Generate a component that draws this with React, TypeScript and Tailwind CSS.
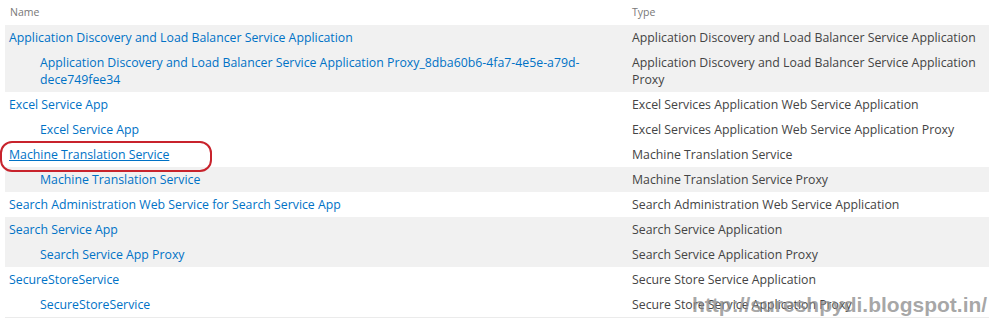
import React from "react";

type Row = {
  name: string;
  type: string;
  child?: boolean;
  shaded?: boolean;
  underline?: boolean;
};

const rows: Row[] = [
  {
    name: "Application Discovery and Load Balancer Service Application",
    type: "Application Discovery and Load Balancer Service Application",
    shaded: true,
  },
  {
    name: "Application Discovery and Load Balancer Service Application Proxy_8dba60b6-4fa7-4e5e-a79d-dece749fee34",
    type: "Application Discovery and Load Balancer Service Application Proxy",
    child: true,
    shaded: true,
  },
  { name: "Excel Service App", type: "Excel Services Application Web Service Application" },
  { name: "Excel Service App", type: "Excel Services Application Web Service Application Proxy", child: true },
  { name: "Machine Translation Service", type: "Machine Translation Service", underline: true },
  { name: "Machine Translation Service", type: "Machine Translation Service Proxy", child: true, shaded: true },
  { name: "Search Administration Web Service for Search Service App", type: "Search Administration Web Service Application" },
  { name: "Search Service App", type: "Search Service Application", shaded: true },
  { name: "Search Service App Proxy", type: "Search Service Application Proxy", child: true, shaded: true },
  { name: "SecureStoreService", type: "Secure Store Service Application" },
  { name: "SecureStoreService", type: "Secure Store Service Application Proxy", child: true },
];

export default function App() {
  return (
    <div
      className="relative w-[989px] h-[320px] overflow-hidden bg-white"
      style={{ fontFamily: '"Open Sans", "Noto Sans", sans-serif' }}
    >
      <div className="flex h-[25px] items-center text-[10.5px] text-[#777]">
        <div className="w-[632px] pl-[10px]">Name</div>
        <div className="flex-1">Type</div>
      </div>

      <div className="ml-[5px] border-b border-[#ebebeb]">
        {rows.map((r, i) => (
          <div
            key={i}
            className={`flex min-h-[25px] py-[4px] text-[12.3px] leading-[17px] ${r.shaded ? "bg-[#f1f1f1]" : "bg-white"}`}
          >
            <div className={`w-[627px] pr-[20px] ${r.child ? "pl-[35px]" : "pl-[4px]"}`}>
              <span className={`text-[#0072c6] ${r.underline ? "underline" : ""}`}>{r.name}</span>
            </div>
            <div className="flex-1 pr-[2px] text-[#444]">{r.type}</div>
          </div>
        ))}
      </div>

      <div className="absolute left-[0px] top-[141px] h-[31px] w-[212px] rounded-[12px] border-[2px] border-[#c8232c]" />

      <div
        className="absolute left-[692px] top-[292px] text-[21px] font-bold leading-[26px] text-[#8a8a8a]/75"
        style={{ fontFamily: '"Liberation Sans", Arial, sans-serif' }}
      >
        http://sureshpydi.blogspot.in/
      </div>
    </div>
  );
}
